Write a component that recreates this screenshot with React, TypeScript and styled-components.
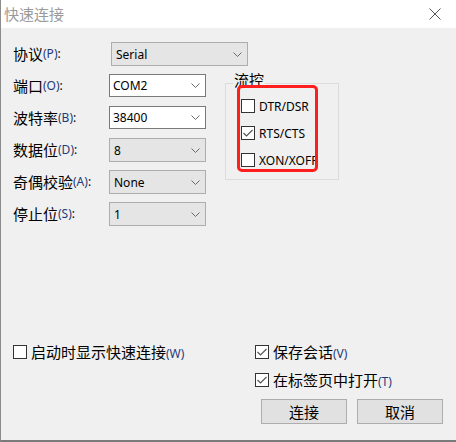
import React from "react";
import styled, { createGlobalStyle } from "styled-components";

const Global = createGlobalStyle`
  html, body { margin: 0; padding: 0; background: #fff; }
  * { box-sizing: border-box; }
`;

const Window = styled.div`
  width: 456px;
  height: 442px;
  border-left: 1px solid #8c8c8c;
  border-bottom: 2px solid #7a7a7a;
  background: #f0f0f0;
  display: flex;
  flex-direction: column;
  font-family: "Noto Sans", "Noto Sans CJK SC", sans-serif;
  font-size: 12px;
  color: #000;
`;

const TitleBar = styled.div`
  height: 28px;
  background: #fff;
  display: flex;
  align-items: center;
  justify-content: space-between;
  padding: 0 15px 0 3px;
`;

const Title = styled.span`
  font-family: "Noto Sans CJK SC", sans-serif;
  font-size: 15px;
  color: #9a9a9a;
  line-height: 20px;
`;

const CloseIcon = styled.svg`
  display: block;
`;

const Body = styled.div`
  flex: 1;
  display: flex;
  flex-direction: column;
  padding: 14px 13px 16px 12px;
`;

const Form = styled.div`
  display: grid;
  grid-template-columns: 96px 97px 133px;
  grid-auto-rows: 23px;
  row-gap: 9px;
  align-items: start;
`;

const Label = styled.div`
  grid-column: 1;
  display: flex;
  align-items: center;
  height: 23px;
  white-space: nowrap;
`;

const Zh = styled.span`
  font-family: "Noto Sans CJK SC", sans-serif;
  font-size: 15px;
  line-height: 20px;
`;

const Key = styled.span`
  color: #1f3a78;
  font-size: 12px;
`;

const Combo = styled.div<{ $w: number; $editable?: boolean; $wide?: boolean }>`
  grid-column: ${(p) => (p.$wide ? "2 / 4" : "2")};
  justify-self: start;
  width: ${(p) => p.$w}px;
  height: ${(p) => (p.$editable ? 23 : 24)}px;
  margin-left: ${(p) => (p.$wide ? 2 : 0)}px;
  display: flex;
  align-items: center;
  justify-content: space-between;
  padding: 0 5px 0 ${(p) => (p.$editable ? 3 : 4)}px;
  background: ${(p) => (p.$editable ? "#fff" : "#e5e5e5")};
  border: 1px solid ${(p) => (p.$editable ? "#7a7a7a" : "#adadad")};
  font-size: 12px;
`;

const Chevron = () => (
  <svg width="9" height="5" viewBox="0 0 9 5">
    <polyline points="0.5,0.5 4.5,4.5 8.5,0.5" fill="none" stroke="#6a6a6a" strokeWidth="1" />
  </svg>
);

const GroupBox = styled.fieldset`
  grid-column: 3;
  grid-row: 2 / span 5;
  margin: -4px 0 0 19px;
  padding: 0;
  width: 114px;
  border: 1px solid #dcdcdc;
  min-width: 0;
`;

const Legend = styled.legend`
  margin-left: 7px;
  padding: 0 1px 6px;
  font-family: "Noto Sans CJK SC", sans-serif;
  font-size: 15px;
  line-height: 20px;
`;

const CheckList = styled.div`
  position: relative;
  display: flex;
  flex-direction: column;
  gap: 7px;
  padding: 0 0 9px 15px;
`;

const Highlight = styled.div`
  position: absolute;
  left: 11px;
  top: -11px;
  width: 81px;
  height: 87px;
  border: 3px solid #ff1e1e;
  border-radius: 5px;
  pointer-events: none;
`;

const CheckRow = styled.label`
  display: flex;
  align-items: center;
  height: 20px;
  gap: 4px;
  white-space: nowrap;
`;

const Box = styled.span`
  width: 14px;
  height: 14px;
  flex: none;
  border: 1px solid #333;
  background: #fff;
  display: flex;
  align-items: center;
  justify-content: center;
`;

const Check = ({ checked }: { checked?: boolean }) => (
  <Box>
    {checked && (
      <svg width="12" height="12" viewBox="0 0 12 12">
        <polyline points="1.5,6 4.5,9 10.5,3" fill="none" stroke="#555" strokeWidth="1.2" />
      </svg>
    )}
  </Box>
);

const BottomSection = styled.div`
  margin-top: auto;
  display: flex;
  align-items: flex-start;
`;

const LeftCol = styled.div`
  width: 242px;
`;

const RightCol = styled.div`
  flex: 1;
  display: flex;
  flex-direction: column;
  gap: 8px;
`;

const ButtonRow = styled.div`
  margin-top: 1px;
  display: flex;
  justify-content: flex-end;
  gap: 10px;
`;

const Button = styled.button`
  width: 86px;
  height: 25px;
  padding: 0;
  background: #e1e1e1;
  border: 1px solid #adadad;
  font-family: "Noto Sans CJK SC", sans-serif;
  font-size: 15px;
  color: #000;
  display: flex;
  align-items: center;
  justify-content: center;
`;

const fields: { zh: string; key: string; value: string; editable?: boolean }[] = [
  { zh: "端口", key: "(O)", value: "COM2", editable: true },
  { zh: "波特率", key: "(B)", value: "38400", editable: true },
  { zh: "数据位", key: "(D)", value: "8" },
  { zh: "奇偶校验", key: "(A)", value: "None" },
  { zh: "停止位", key: "(S)", value: "1" },
];

export default function App() {
  return (
    <Window>
      <Global />
      <TitleBar>
        <Title>快速连接</Title>
        <CloseIcon width="12" height="12" viewBox="0 0 12 12">
          <line x1="0.5" y1="0.5" x2="11.5" y2="11.5" stroke="#555" strokeWidth="1" />
          <line x1="11.5" y1="0.5" x2="0.5" y2="11.5" stroke="#555" strokeWidth="1" />
        </CloseIcon>
      </TitleBar>
      <Body>
        <Form>
          <Label>
            <Zh>协议</Zh>
            <Key>(P)</Key>:
          </Label>
          <Combo $w={137} $wide>
            <span>Serial</span>
            <Chevron />
          </Combo>
          {fields.map((f) => (
            <React.Fragment key={f.key}>
              <Label>
                <Zh>{f.zh}</Zh>
                <Key>{f.key}</Key>:
              </Label>
              <Combo $w={97} $editable={f.editable}>
                <span>{f.value}</span>
                <Chevron />
              </Combo>
            </React.Fragment>
          ))}
          <GroupBox>
            <Legend>流控</Legend>
            <CheckList>
              <CheckRow>
                <Check />
                DTR/DSR
              </CheckRow>
              <CheckRow>
                <Check checked />
                RTS/CTS
              </CheckRow>
              <CheckRow>
                <Check />
                XON/XOFF
              </CheckRow>
              <Highlight />
            </CheckList>
          </GroupBox>
        </Form>
        <BottomSection>
          <LeftCol>
            <CheckRow>
              <Check />
              <span>
                <Zh>启动时显示快速连接</Zh>
                <Key>(W)</Key>
              </span>
            </CheckRow>
          </LeftCol>
          <RightCol>
            <CheckRow>
              <Check checked />
              <span>
                <Zh>保存会话</Zh>
                <Key>(V)</Key>
              </span>
            </CheckRow>
            <CheckRow>
              <Check checked />
              <span>
                <Zh>在标签页中打开</Zh>
                <Key>(T)</Key>
              </span>
            </CheckRow>
            <ButtonRow>
              <Button>连接</Button>
              <Button>取消</Button>
            </ButtonRow>
          </RightCol>
        </BottomSection>
      </Body>
    </Window>
  );
}
